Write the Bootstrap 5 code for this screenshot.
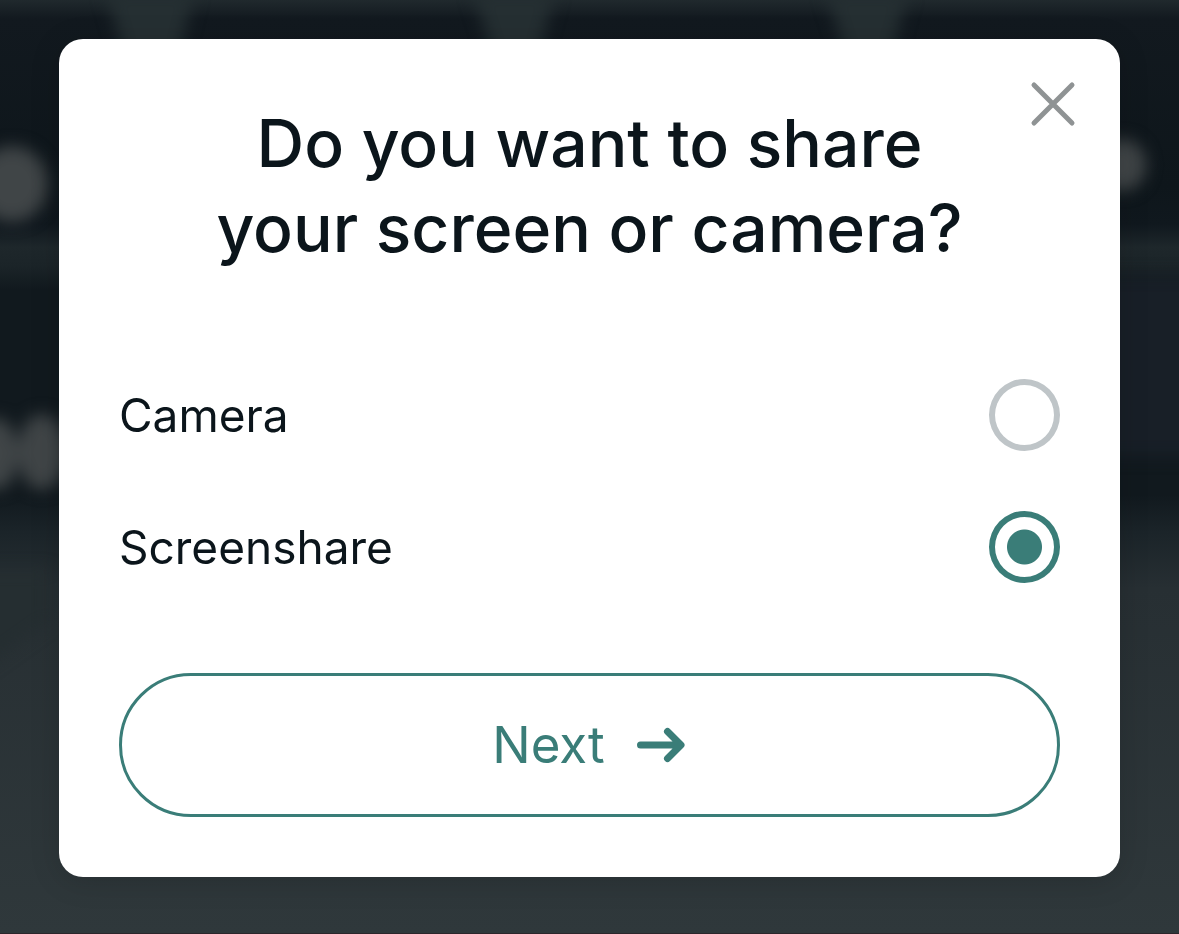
<!DOCTYPE html>
<html lang="en">
<head>
<meta charset="utf-8">
<meta name="viewport" content="width=device-width, initial-scale=1">
<title>Share your screen or camera</title>
<link href="https://cdn.jsdelivr.net/npm/bootstrap@5.3.0/dist/css/bootstrap.min.css" rel="stylesheet">
<style>
  :root { --teal: #3a7d78; --ink: #0b151b; }
  body { font-family: Inter, "Liberation Sans", sans-serif; color: var(--ink); background: #11191e; }
  .stage { padding: 39px 59px 57px; }
  .backdrop-art { z-index: -1; }
  .share-dialog { border-radius: 24px; padding: 60px; box-shadow: 0 4px 30px rgba(0, 0, 0, .15); }
  .share-title { font-size: 66px; line-height: 85px; font-weight: 500; padding-top: 2px; margin-bottom: 108px; }
  .dialog-close { top: 36px; right: 38px; padding: 6px; line-height: 0; color: #8f9394; }
  .choices { gap: 60px; margin-bottom: 90px; }
  .choice-label { font-size: 46px; line-height: 72px; }
  .choice-input.form-check-input { width: 71px; height: 72px; border: 6px solid #bfc5c8; background-color: #fff; }
  .choice-input.form-check-input:checked { border-color: var(--teal); background-color: #fff; background-image: radial-gradient(circle, var(--teal) 17px, transparent 18px); background-size: auto; }
  .btn-next { --bs-btn-color: var(--teal); --bs-btn-border-color: var(--teal); --bs-btn-hover-color: #fff; --bs-btn-hover-bg: var(--teal); --bs-btn-border-width: 3px; font-size: 51px; line-height: 72px; padding: 33px; gap: 30px; }
</style>
</head>
<body>
<svg class="backdrop-art position-fixed top-0 start-0 w-100 h-100" viewBox="0 0 1179 934" preserveAspectRatio="none" aria-hidden="true">
  <defs>
    <linearGradient id="room" x1="0" y1="0" x2="0" y2="1">
      <stop offset="0" stop-color="#20292d"/><stop offset=".02" stop-color="#12191f"/>
      <stop offset=".2" stop-color="#0e161b"/><stop offset=".24" stop-color="#10181e"/>
      <stop offset=".265" stop-color="#1e272b"/><stop offset=".285" stop-color="#1b2428"/>
      <stop offset=".31" stop-color="#11191e"/><stop offset=".53" stop-color="#11191e"/>
      <stop offset=".57" stop-color="#1b2429"/><stop offset=".63" stop-color="#272f33"/>
      <stop offset="1" stop-color="#2f383b"/>
    </linearGradient>
    <filter id="haze" x="-50%" y="-50%" width="200%" height="200%" color-interpolation-filters="sRGB"><feGaussianBlur stdDeviation="8"/></filter>
  </defs>
  <rect width="1179" height="934" fill="url(#room)"/>
  <g filter="url(#haze)">
    <path d="M105-10h90l-20 80h-46zM472-10h84l-22 80h-36zM825-10h84l-22 80h-36z" fill="#252f32"/>
    <ellipse cx="12" cy="184" rx="36" ry="38" fill="#404547"/>
    <ellipse cx="1122" cy="165" rx="24" ry="26" fill="#404547"/>
    <ellipse cx="-4" cy="454" rx="22" ry="36" fill="#404547"/>
    <ellipse cx="42" cy="452" rx="24" ry="38" fill="#404547"/>
    <path d="M1100 276h100v180h-100z" fill="#181f27"/>
    <path d="M-20 670l70-50v-50h-70z" fill="#252e31"/>
  </g>
  <rect y="933" width="1179" height="1" fill="#2c262b"/>
</svg>

<main class="stage">
  <form class="share-dialog position-relative bg-white" role="dialog" aria-labelledby="shareTitle">
    <button type="button" class="dialog-close btn border-0 position-absolute" aria-label="Close">
      <svg width="46" height="46" viewBox="0 0 46 46" fill="none" stroke="currentColor" stroke-width="5" stroke-linecap="round" aria-hidden="true"><path d="M4 4l38 38m0-38l-38 38"/></svg>
    </button>
    <h1 id="shareTitle" class="share-title text-center">Do you want to share<br>your screen or camera?</h1>
    <div class="choices d-flex flex-column">
      <div class="d-flex align-items-center justify-content-between">
        <label class="choice-label flex-grow-1" for="camera">Camera</label>
        <input class="choice-input form-check-input m-0 flex-shrink-0" type="radio" name="source" id="camera">
      </div>
      <div class="d-flex align-items-center justify-content-between">
        <label class="choice-label flex-grow-1" for="screenshare">Screenshare</label>
        <input class="choice-input form-check-input m-0 flex-shrink-0" type="radio" name="source" id="screenshare" checked>
      </div>
    </div>
    <button type="button" class="btn-next btn rounded-pill w-100 d-flex align-items-center justify-content-center">
      Next
      <svg width="52" height="38" viewBox="0 0 52 38" fill="none" stroke="currentColor" stroke-width="7" stroke-linecap="round" stroke-linejoin="round" aria-hidden="true"><path d="M5.500 19h40M32.500 5.500L46 19L32.500 32.500"/></svg>
    </button>
  </form>
</main>
<script src="https://cdn.jsdelivr.net/npm/bootstrap@5.3.0/dist/js/bootstrap.bundle.min.js"></script>
</body>
</html>
